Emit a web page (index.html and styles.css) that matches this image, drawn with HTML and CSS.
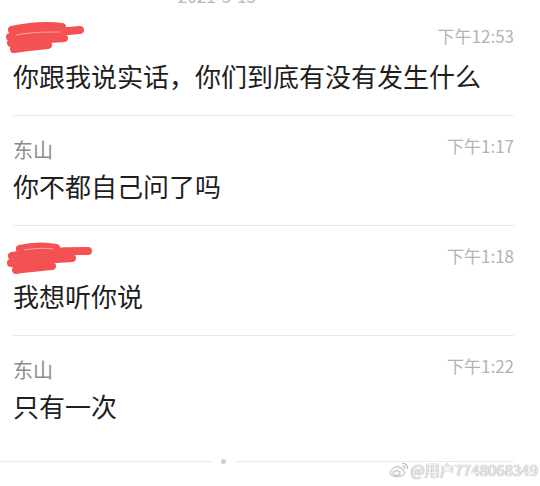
FILE: index.html
```html
<!DOCTYPE html>
<html lang="zh-CN">

<head>
  <meta charset="UTF-8" />
  <title>聊天记录</title>
  <link rel="stylesheet" href="styles.css">
</head>

<body>

  <div class="date">2021-5-13</div>

  <!-- 消息列表 -->
  <div class="msg">
    <div class="msg-head">
      <span class="msg-name hidden-name">
        <svg class="scribble" width="92" height="36" viewBox="0 0 92 36">
          <path d="M6 9 C22 5 44 4 56 6 M4 16 C26 12 52 11 74 9 M5 22 C24 19 42 18 58 17 M8 28 C20 26 32 25 42 24"
            fill="none" stroke="#f45252" stroke-width="8" stroke-linecap="round" />
          <path d="M10 14 C26 11 42 11 54 11" fill="none" stroke="#fff" stroke-width="0.8" opacity="0.6" />
        </svg>
      </span>
      <span class="msg-time">下午12:53</span>
    </div>
    <p class="msg-text">你跟我说实话，你们到底有没有发生什么</p>
  </div>

  <div class="msg">
    <div class="msg-head">
      <span class="msg-name">东山</span>
      <span class="msg-time">下午1:17</span>
    </div>
    <p class="msg-text">你不都自己问了吗</p>
  </div>

  <div class="msg">
    <div class="msg-head">
      <span class="msg-name hidden-name">
        <svg class="scribble" width="92" height="36" viewBox="0 0 92 36">
          <path d="M14 8 C26 5 40 5 50 7 M6 15 C30 11 60 10 82 10 M5 22 C28 19 48 18 66 17 M10 29 C24 27 36 26 46 25"
            fill="none" stroke="#f45252" stroke-width="8" stroke-linecap="round" />
          <path d="M18 9 C30 7 40 7 48 8" fill="none" stroke="#fff" stroke-width="0.8" opacity="0.6" />
        </svg>
      </span>
      <span class="msg-time">下午1:18</span>
    </div>
    <p class="msg-text">我想听你说</p>
  </div>

  <div class="msg last">
    <div class="msg-head">
      <span class="msg-name">东山</span>
      <span class="msg-time">下午1:22</span>
    </div>
    <p class="msg-text">只有一次</p>
  </div>

  <div class="footer">
    <span class="footer-line left"></span>
    <span class="footer-dot"></span>
    <span class="footer-line right"></span>
  </div>

  <!-- 水印 -->
  <div class="watermark">
    <svg width="20" height="16" viewBox="0 0 20 16">
      <path d="M8 4.5 C3.5 5.5 0.5 9 1.5 12 C3 15 10 15.5 14 13.2 C17 11.3 16.2 8.4 13.6 8.2 C14.6 6.2 13 5.2 10.8 6.2 C11 4.6 10 4 8 4.5Z"
        fill="#f6f6f6" stroke="#b9b9b9" stroke-width="1" />
      <ellipse cx="7.5" cy="11.2" rx="3.6" ry="2.4" fill="none" stroke="#b9b9b9" stroke-width="1" />
      <path d="M13.5 1.5 A4.5 4.5 0 0 1 18.5 6.5" fill="none" stroke="#b9b9b9" stroke-width="1.2" stroke-linecap="round" />
      <path d="M13.8 4 A2 2 0 0 1 16 6.4" fill="none" stroke="#b9b9b9" stroke-width="1.2" stroke-linecap="round" />
    </svg>
    <span>@用户7748068349</span>
  </div>

</body>

</html>
```

FILE: styles.css
```css
body {
  margin: 0;
  height: 486px;
  overflow: hidden;
  background: #fff;
  font-family: "Noto Sans CJK SC", "Noto Sans", sans-serif;
  position: relative;
}

.date {
  margin: -12px 0 2px 178px;
  height: 16px;
  font-size: 17px;
  line-height: 16px;
  color: #b8b8b8;
}

.msg {
  padding: 24px 26px 0 13px;
}

.msg-head {
  display: flex;
  justify-content: space-between;
  align-items: flex-start;
  height: 20px;
}

.msg-name {
  font-size: 20px;
  line-height: 20px;
  color: #8c8c8c;
}

.hidden-name {
  position: relative;
  width: 80px;
  height: 20px;
}

.scribble {
  position: absolute;
  top: -9px;
  left: -7px;
}

.msg-time {
  font-size: 17px;
  line-height: 20px;
  color: #b3b3b3;
  margin-top: -4px;
}

.msg-text {
  margin: 13px 0 0;
  padding-bottom: 27px;
  font-size: 26px;
  line-height: 25px;
  color: #1e1e1e;
  border-bottom: 1px solid #e9e9e9;
}

.msg.last .msg-text {
  border-bottom: none;
}

.footer {
  display: flex;
  align-items: center;
  width: 514px;
  height: 5px;
  margin-top: 14px;
}

.footer-line {
  height: 1px;
  background: #ebebeb;
}

.footer-line.left {
  width: 212px;
}

.footer-line.right {
  flex: 1;
}

.footer-dot {
  width: 5px;
  height: 5px;
  margin: 0 9px;
  border-radius: 50%;
  background: #cfcfcf;
}

.watermark {
  position: absolute;
  right: 2px;
  top: 461px;
  display: flex;
  align-items: center;
  gap: 2px;
  font-size: 15px;
  line-height: 18px;
  color: #f2f2f2;
  text-shadow: 0 0 1px #9a9a9a, 0 0 1px #9a9a9a;
}
```
